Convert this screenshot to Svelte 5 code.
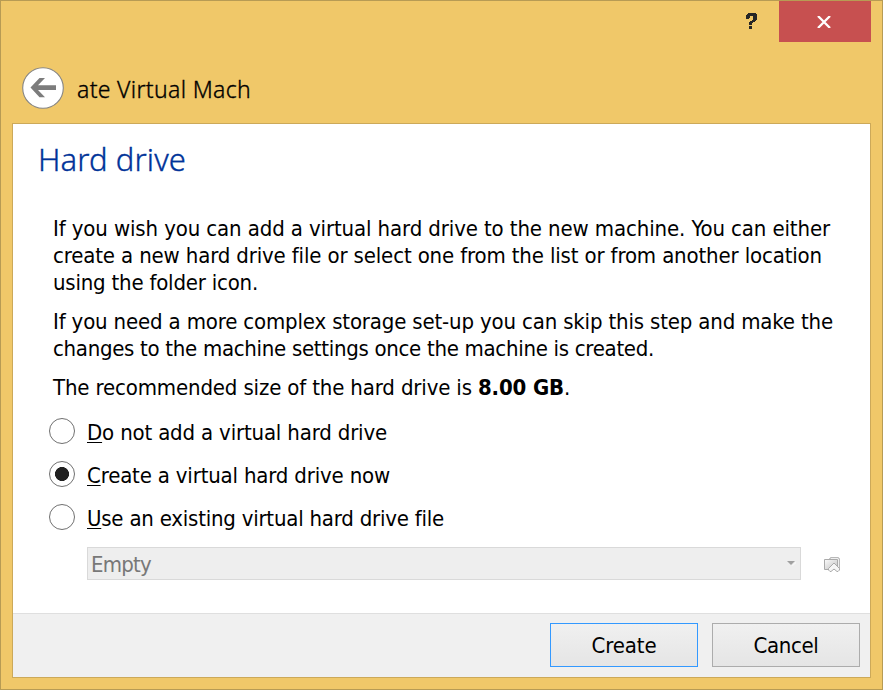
<script>
  let selected = $state('create');

  const options = [
    { id: 'none', key: 'D', rest: 'o not add a virtual hard drive', width: 300 },
    { id: 'create', key: 'C', rest: 'reate a virtual hard drive now', width: 303 },
    { id: 'existing', key: 'U', rest: 'se an existing virtual hard drive file', width: 357 }
  ];

  const intro = [
    ['If you wish you can add a virtual hard drive to the new machine. You can either', 777],
    ['create a new hard drive file or select one from the list or from another location', 769],
    ['using the folder icon.', 205]
  ];
  const skip = [
    ['If you need a more complex storage set-up you can skip this step and make the', 780],
    ['changes to the machine settings once the machine is created.', 601]
  ];

  // Adjusts tracking so that a line keeps its designed width.
  function fit(node, width) {
    const natural = node.getBoundingClientRect().width;
    node.style.letterSpacing = (width - natural) / node.textContent.length + 'px';
  }
</script>

<div class="window">
  <div class="controls">
    <button class="help" aria-label="Help">
      <svg width="12" height="17" viewBox="0 0 12 17" shape-rendering="crispEdges">
        <path fill="#262626" d="M2 0h8v1h1v6h-1v1H9v1H7v1H6v2H3V9h1V8h2V7h1V3H4v2H3v1H0V2h1V1h1zM3 13h3v3H3z" />
      </svg>
    </button>
    <button class="close" aria-label="Close">
      <svg width="14" height="12" viewBox="0 0 14 12">
        <path d="M1 0L13 12M13 0L1 12" stroke="#fff" stroke-width="2.3" />
      </svg>
    </button>
  </div>

  <header>
    <button class="back" aria-label="Back">
      <svg width="42" height="42" viewBox="0 0 42 42">
        <circle cx="21" cy="21" r="20.3" fill="#fff" stroke="#858585" stroke-width="1.1" />
        <path fill="#7c7c7c" d="M8.5 20.5L17.5 11H23l-7 7.2h18v4.8H16l7 7.2h-5.5z" />
      </svg>
    </button>
    <span class="title" use:fit={174}>ate Virtual Mach</span>
  </header>

  <main>
    <section>
      <h1><span use:fit={148}>Hard drive</span></h1>
      <div class="body">
        <p>{#each intro as [line, width]}<span class="line" use:fit={width}>{line}</span>{/each}</p>
        <p>{#each skip as [line, width]}<span class="line" use:fit={width}>{line}</span>{/each}</p>
        <p><span class="line"><span use:fit={425}>The recommended size of the hard drive is&nbsp;</span><b use:fit={86}>8.00 GB</b>.</span></p>
      </div>
      <div class="options">
        {#each options as option}
          <label>
            <input type="radio" name="drive" value={option.id} bind:group={selected} />
            <span class="text" use:fit={option.width}><u>{option.key}</u>{option.rest}</span>
          </label>
        {/each}
      </div>
      <div class="picker">
        <div class="combo">
          <span use:fit={60}>Empty</span>
          <svg width="9" height="5" viewBox="0 0 9 5"><path d="M2 5h3L9 1v1L5.5 5z" fill="#fff" /><path d="M0 0h8L4 4z" fill="#a0a0a0" /></svg>
        </div>
        <button class="folder" aria-label="Choose a virtual hard drive file" disabled>
          <svg width="17" height="16" viewBox="0 0 17 16">
            <defs><linearGradient id="face" x2="1" y2="1"><stop stop-color="#fcfcfc" /><stop offset="1" stop-color="#c0c0c0" /></linearGradient></defs>
            <path d="M5.5 2.5V1.5H6.5V.5H14.5V1.5H15.5V12" fill="#eee" stroke="#b8b8b8" />
            <path d="M.5 2.5H13.5V12.5H.5z" fill="url(#face)" stroke="#aaa" />
            <path d="M10 6L15.5 11.5V13L14 14.5H13L10 12L7 14.5H6L4.5 13V11.5z" fill="#f5f5f5" stroke="#aaa" />
          </svg>
        </button>
      </div>
    </section>
    <footer>
      <button class="default"><span use:fit={65}>Create</span></button>
      <button><span use:fit={65}>Cancel</span></button>
    </footer>
  </main>
</div>

<style>
  .window {
    box-sizing: border-box;
    width: 883px;
    height: 690px;
    display: flex;
    flex-direction: column;
    padding: 0 11px 11px;
    background: #f0c869;
    border: 1px solid #b79b54;
    color: #000;
    font: 22px/27px "DejaVu Sans Condensed", "DejaVu Sans", sans-serif;
    font-stretch: condensed;
    white-space: nowrap;
  }
  button { padding: 0; border: 0; background: none; font: inherit; color: inherit; }
  svg { display: block; }
  .controls { display: flex; justify-content: flex-end; height: 41px; }
  .help { width: 56px; padding: 0 0 1px; }
  .help svg { margin: 0 auto; transform: translateX(1px); }
  .close { width: 92px; background: #c75050; }
  .close svg { margin: 0 auto; transform: translateX(-1px); }
  header { height: 81px; display: flex; align-items: flex-start; padding-left: 10px; box-sizing: border-box; }
  .back { margin-top: 25px; }
  .title { margin: 31px 0 0 13px; font: 300 23px/32px "Noto Sans", sans-serif; -webkit-text-stroke: 0.35px #000; }
  main {
    flex: 1;
    display: flex;
    flex-direction: column;
    border: 1px solid #cca959;
    background: #fff;
  }
  section { flex: 1; display: flow-root; }
  h1 { margin: 13px 0 0 25px; font: 300 31px/44px "Noto Sans", sans-serif; color: #003399; -webkit-text-stroke: 0.35px #003399; }
  .body { margin: 34px 0 0 40px; }
  p { margin: 0 0 12px; }
  .line { display: block; width: max-content; }
  .options { margin: 17px 0 0 36px; display: grid; gap: 17px; }
  label { display: flex; align-items: center; height: 26px; }
  .text { position: relative; top: 1px; }
  u { text-decoration-thickness: 1px; text-underline-offset: 2px; text-decoration-skip-ink: none; }
  input {
    appearance: none;
    box-sizing: border-box;
    width: 26px;
    height: 26px;
    margin: 0 12px 0 0;
    border: 1px solid #707070;
    border-radius: 50%;
    background: #fff;
  }
  input:checked { background: radial-gradient(circle, #212121 6.7px, #fff 7.3px); }
  .picker { display: flex; align-items: center; margin: 17px 0 0 74px; }
  .combo {
    box-sizing: border-box;
    width: 714px;
    height: 33px;
    display: flex;
    align-items: center;
    justify-content: space-between;
    padding: 2px 4px 0 3px;
    border: 1px solid #d9d9d9;
    background: #eee;
    color: #787878;
  }
  .combo svg { margin-bottom: 2px; }
  .folder { margin: 2px 0 0 23px; }
  footer {
    box-sizing: border-box;
    height: 64px;
    display: flex;
    justify-content: flex-end;
    gap: 14px;
    padding: 9px 10px 10px 0;
    border-top: 1px solid #dfdfdf;
    background: #f0f0f0;
  }
  footer button {
    box-sizing: border-box;
    width: 148px;
    height: 44px;
    border: 1px solid #acacac;
    background: linear-gradient(#f0f0f0, #e5e5e5);
  }
  footer .default { border-color: #3399ff; }
</style>
